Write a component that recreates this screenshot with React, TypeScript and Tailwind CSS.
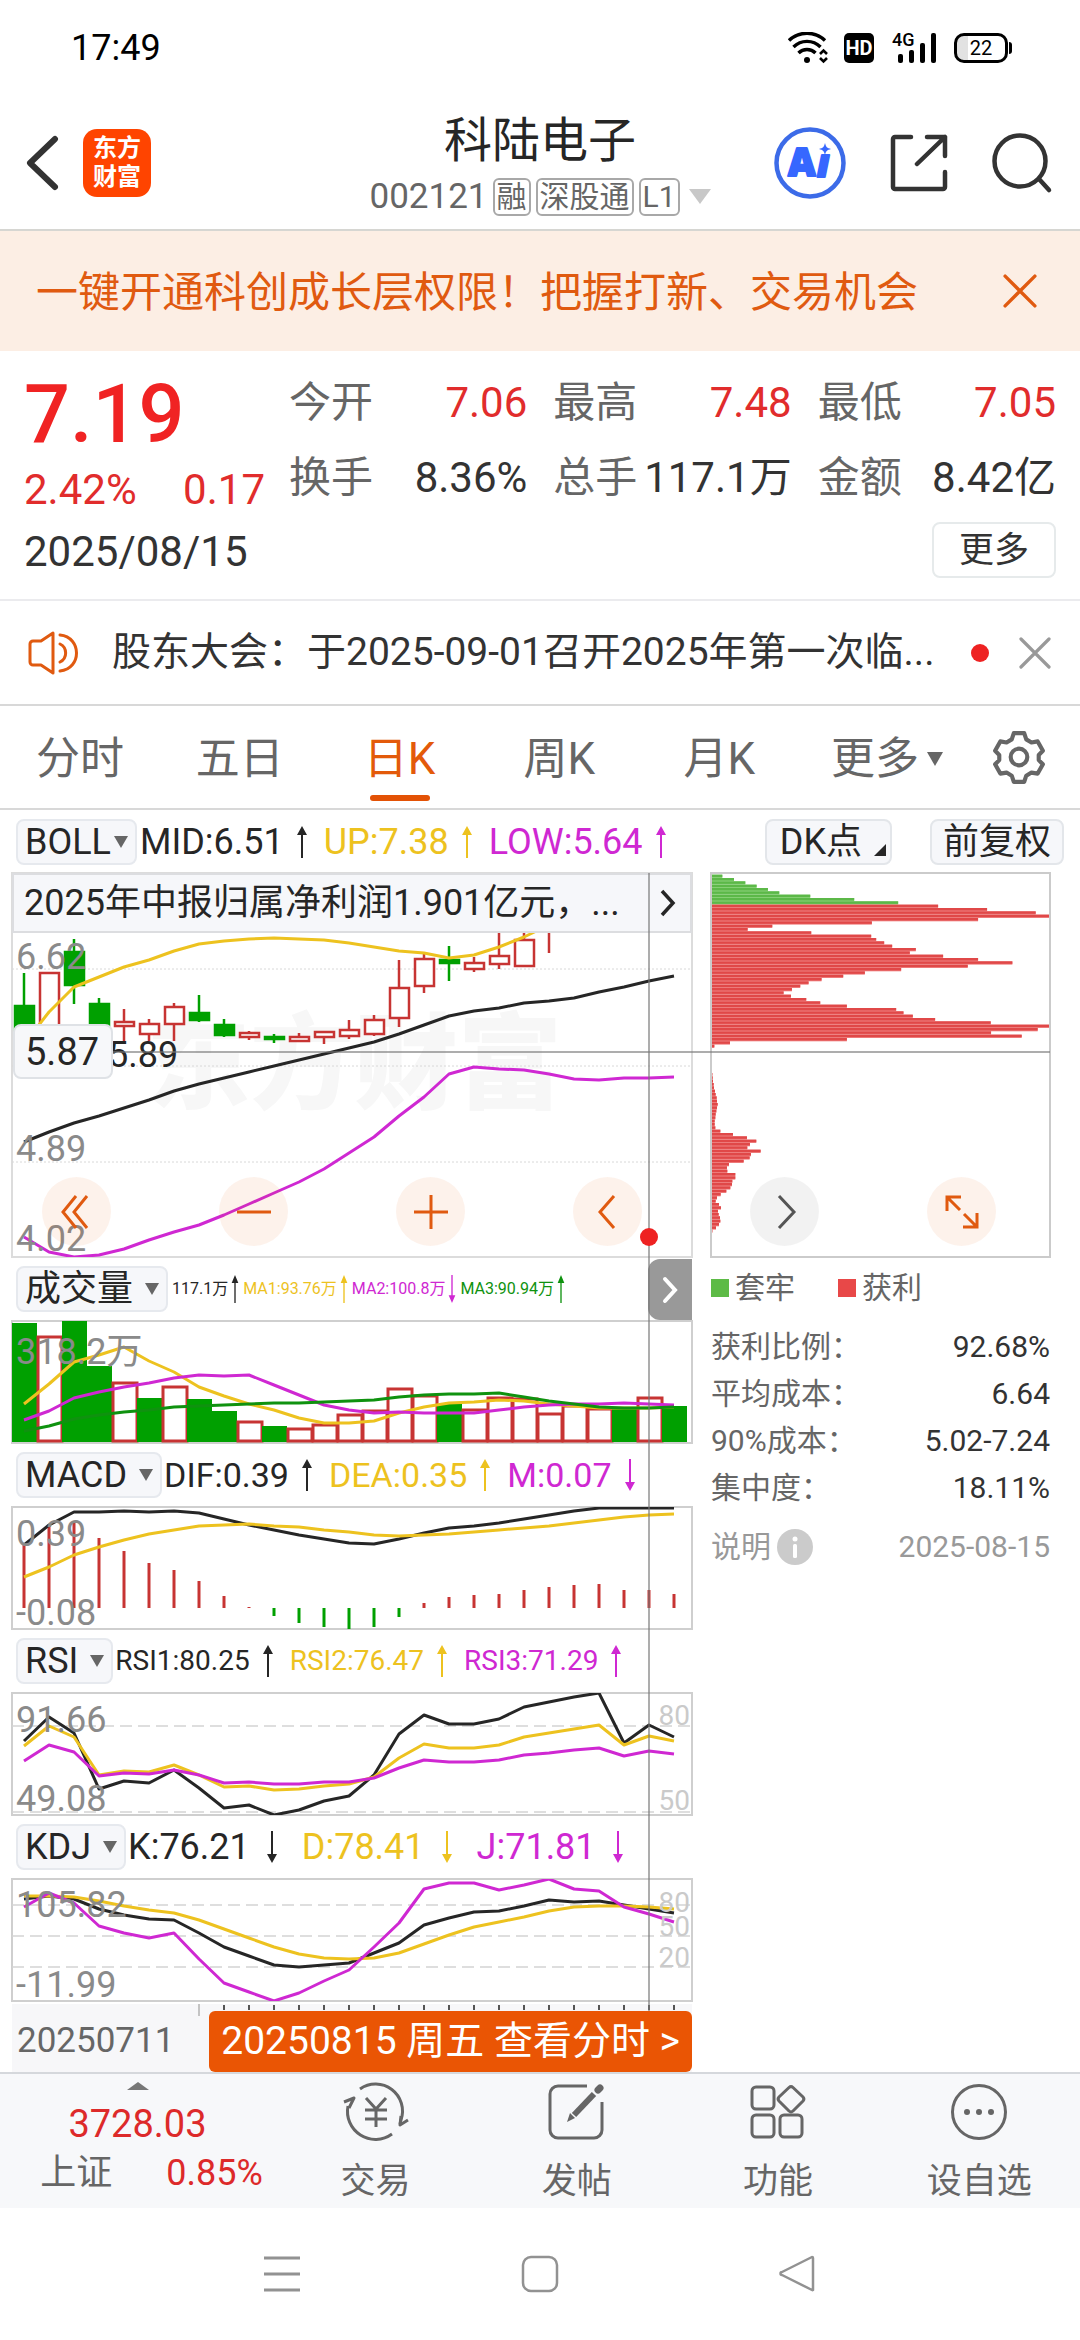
import React from "react";

const DARK = "#262626";
const YELLOW = "#edc21f";
const PURPLE = "#cf28d2";
const RED = "#c73433";
const GREEN = "#00a000";
const DEEP_GREEN = "#0f920f";

/* ---------- chart data: one value per trading day ---------- */
const dayX = (i: number) => 24 + i * 25;

const bollUp = [1044, 1012, 987, 977, 967, 960, 951, 944, 941, 939, 938, 939, 940, 943, 947, 951, 953, 958, 955, 947, 937, 925];
const bollMid = [1142, 1132, 1123, 1116, 1108, 1100, 1091, 1084, 1078, 1072, 1066, 1060, 1054, 1048, 1042, 1034, 1025, 1016, 1011, 1008, 1003, 1001, 998, 992, 987, 981, 976];
const bollLow = [1237, 1252, 1257, 1255, 1249, 1240, 1232, 1225, 1215, 1204, 1193, 1182, 1169, 1153, 1137, 1116, 1097, 1074, 1067, 1069, 1070, 1074, 1079, 1080, 1078, 1078, 1077];

// [rising, body top, body bottom, high, low]
const candles: [boolean, number, number, number, number][] = [
  [false, 1006, 1040, 973, 1040],
  [true, 973, 1045, 973, 1045],
  [false, 952, 985, 939, 1004],
  [false, 1004, 1030, 998, 1030],
  [true, 1022, 1026, 1009, 1044],
  [true, 1024, 1034, 1019, 1041],
  [true, 1007, 1024, 1003, 1041],
  [false, 1013, 1020, 995, 1022],
  [false, 1025, 1035, 1019, 1037],
  [true, 1033, 1037, 1031, 1040],
  [false, 1037, 1039, 1034, 1043],
  [true, 1037, 1041, 1033, 1042],
  [true, 1032, 1037, 1032, 1044],
  [true, 1030, 1036, 1020, 1039],
  [true, 1020, 1034, 1015, 1036],
  [true, 988, 1018, 960, 1027],
  [true, 959, 986, 953, 993],
  [false, 960, 963, 946, 981],
  [true, 963, 969, 957, 972],
  [true, 956, 964, 932, 969],
  [true, 940, 966, 932, 967],
  [true, 920, 925, 920, 953],
];

const volume: [boolean, number][] = [
  [false, 1324], [true, 1337], [false, 1322], [false, 1367], [true, 1383], [false, 1399], [true, 1387], [false, 1400], [false, 1412],
  [true, 1422], [false, 1427], [true, 1429], [true, 1425], [true, 1415], [true, 1411], [true, 1389], [true, 1396], [false, 1405],
  [true, 1410], [true, 1398], [true, 1399], [true, 1414], [true, 1406], [true, 1409], [false, 1409], [true, 1398], [false, 1407],
];
const ma1 = [1404, 1384, 1362, 1355, 1347, 1361, 1372, 1387, 1396, 1404, 1410, 1418, 1423, 1423, 1421, 1413, 1407, 1403, 1402, 1400, 1401, 1404, 1406, 1408, 1408, 1408, 1407];
const ma2 = [1420, 1411, 1398, 1392, 1387, 1383, 1378, 1375, 1376, 1375, 1385, 1395, 1405, 1410, 1413, 1412, 1413, 1413, 1413, 1410, 1407, 1405, 1404, 1404, 1403, 1404, 1405];
const ma3 = [1431, 1426, 1419, 1415, 1412, 1410, 1407, 1406, 1405, 1404, 1403, 1403, 1402, 1401, 1400, 1397, 1395, 1394, 1394, 1393, 1397, 1401, 1404, 1407, 1408, 1408, 1407];

const dif = [1545, 1525, 1512, 1512, 1511, 1512, 1511, 1513, 1519, 1525, 1530, 1535, 1539, 1543, 1544, 1539, 1533, 1528, 1526, 1523, 1519, 1515, 1511, 1508, 1508, 1508, 1508];
const dea = [1577, 1567, 1555, 1547, 1540, 1534, 1530, 1526, 1525, 1524, 1526, 1527, 1530, 1532, 1535, 1536, 1535, 1534, 1532, 1530, 1528, 1526, 1523, 1520, 1517, 1515, 1514];
const macd = [1545, 1525, 1521, 1538, 1551, 1563, 1570, 1581, 1596, 1607, 1616, 1623, 1627, 1629, 1627, 1617, 1603, 1597, 1595, 1594, 1590, 1587, 1585, 1584, 1590, 1590, 1594];

const rsi1 = [1741, 1717, 1733, 1789, 1781, 1783, 1770, 1788, 1808, 1805, 1815, 1810, 1801, 1796, 1775, 1734, 1715, 1724, 1724, 1719, 1707, 1702, 1697, 1693, 1743, 1725, 1737];
const rsi2 = [1746, 1726, 1737, 1775, 1771, 1772, 1765, 1775, 1787, 1786, 1790, 1789, 1786, 1784, 1777, 1758, 1744, 1748, 1748, 1745, 1737, 1733, 1729, 1725, 1745, 1736, 1741];
const rsi3 = [1761, 1745, 1752, 1776, 1773, 1774, 1770, 1775, 1783, 1782, 1784, 1784, 1782, 1782, 1778, 1768, 1760, 1762, 1762, 1760, 1755, 1753, 1750, 1748, 1756, 1751, 1754];

const kLine = [1899, 1896, 1899, 1909, 1915, 1919, 1920, 1933, 1947, 1956, 1965, 1967, 1965, 1963, 1953, 1943, 1925, 1918, 1912, 1911, 1906, 1900, 1902, 1901, 1905, 1909, 1913];
const dLine = [1896, 1896, 1897, 1901, 1906, 1910, 1913, 1920, 1929, 1938, 1947, 1954, 1958, 1959, 1958, 1953, 1944, 1935, 1927, 1922, 1917, 1911, 1907, 1906, 1906, 1907, 1909];
const jLine = [1907, 1893, 1903, 1926, 1933, 1938, 1933, 1959, 1983, 1992, 2001, 1993, 1981, 1970, 1947, 1923, 1889, 1883, 1883, 1890, 1885, 1879, 1889, 1891, 1907, 1914, 1922];

// holdings by price level, as bar lengths
const trapped = [34, 69, 103, 137, 171, 205, 298, 430, 562];
const profitHigh = [682, 829, 975, 1018, 802, 483, 184, 110, 301, 481, 496, 520, 544, 615, 597, 697, 802, 905, 771, 571, 462, 397, 332, 293, 268, 243, 218, 240, 286, 328, 408, 556, 578, 606, 673, 840, 1018, 981, 841, 933, 408, 57, 10];
const profitLow = [4, 5, 6, 8, 9, 12, 14, 17, 18, 20, 18, 16, 14, 13, 11, 11, 13, 28, 66, 108, 136, 117, 109, 149, 120, 116, 98, 54, 48, 49, 73, 73, 64, 63, 58, 46, 29, 18, 14, 24, 30, 21, 23, 27, 28, 24, 15, 4, 3];

/* ---------- shared pieces ---------- */
function Line({ ys, color }: { ys: number[]; color: string }) {
  return (
    <polyline
      points={ys.map((y, i) => `${dayX(i)},${y}`).join(" ")}
      fill="none"
      stroke={color}
      strokeWidth="3"
      strokeLinejoin="round"
    />
  );
}

function Trend({ up = true, color, small = false }: { up?: boolean; color: string; small?: boolean }) {
  return (
    <svg viewBox="0 0 12 32" className={small ? "h-7 w-2" : "h-8 w-3"} fill={color} preserveAspectRatio="none" aria-hidden="true">
      {up ? <path d="M6 0l5 9H7v23H5V9H1z" /> : <path d="M6 32l5-9H7V0H5v23H1z" />}
    </svg>
  );
}

function Dropdown({ label, tight = false }: { label: string; tight?: boolean }) {
  return (
    <button
      type="button"
      className={
        "flex h-[46px] shrink-0 items-center rounded-lg border-2 border-[#e6e9ee] bg-[#f6f7fa] px-[7px] text-[36px] leading-none " +
        (tight ? "gap-[3px]" : "gap-3")
      }
    >
      {label}
      <svg viewBox="0 0 14 14" className="h-[14px] w-[14px]" fill="#666" aria-hidden="true">
        <path d="M0 1h14L7 13z" />
      </svg>
    </button>
  );
}

type Reading = { text: string; color: string; up: boolean };

function Readings({ items, className, gap = "gap-3", small = false }: { items: Reading[]; className: string; gap?: string; small?: boolean }) {
  return (
    <div className={"flex items-center whitespace-nowrap leading-none " + className}>
      {items.map((r) => (
        <span key={r.text} className={"flex shrink-0 items-center " + gap} style={{ color: r.color }}>
          {r.text}
          <Trend up={r.up} color={r.color} small={small} />
        </span>
      ))}
    </div>
  );
}

function Panel({ top, children, labels }: { top: number; children: React.ReactNode; labels: React.ReactNode }) {
  return (
    <div className="relative h-[122px] outline-2 -outline-offset-1 outline-[#cfcfcf]">
      <svg viewBox={`12 ${top} 680 122`} preserveAspectRatio="none" className="absolute inset-0 h-full w-full" aria-hidden="true">
        {children}
      </svg>
      {labels}
    </div>
  );
}

function Dashes({ ys }: { ys: number[] }) {
  return (
    <>
      {ys.map((y) => (
        <line key={y} x1="12" x2="690" y1={y} y2={y} stroke="#d4d4d4" strokeWidth="1.5" strokeDasharray="12 6" />
      ))}
    </>
  );
}

const axis = "absolute left-[4px] text-[36px] leading-none text-[#8a8a8a]";
const level = "absolute right-[2px] text-[28px] leading-none text-[#cacaca]";

function Cross({ className, color }: { className: string; color: string }) {
  return (
    <svg viewBox="0 0 32 32" className={className} fill="none" stroke={color} strokeWidth="3.2" strokeLinecap="round" aria-hidden="true">
      <path d="M2 2l28 28M30 2L2 30" />
    </svg>
  );
}

/* ---------- page sections ---------- */
function StatusBar() {
  return (
    <div className="flex h-24 items-center justify-between pr-[68px] pl-[71px] text-black">
      <span className="text-[36px] leading-none">17:49</span>
      <div className="flex items-center">
        <svg viewBox="0 0 40 32" className="mr-4 h-8 w-10" fill="none" stroke="#000" strokeWidth="3.4" aria-hidden="true">
          <path d="M1 8.500a26 26 0 0 1 36 0M5.500 15a19 19 0 0 1 27 0M10.500 21a12 12 0 0 1 17 0" />
          <circle cx="19" cy="28" r="3" fill="#000" stroke="none" />
          <path d="M32 22l3.500-3.500L39 22M32 26l3.500 3.500L39 26" strokeWidth="2.600" />
        </svg>
        <span className="mr-[18px] flex h-[30px] w-[30px] items-center justify-center rounded-[5px] bg-black text-[20px] leading-none font-bold text-white">
          HD
        </span>
        <span className="relative mr-[18px] h-[30px] w-11">
          <span className="absolute top-0 left-0 text-[18px] leading-[14px] font-medium">4G</span>
          <svg viewBox="0 0 44 30" className="absolute inset-0 h-full w-full" aria-hidden="true">
            <rect x="6" y="21" width="5" height="9" rx="2" />
            <rect x="17" y="17" width="5" height="13" rx="2" />
            <rect x="28" y="10" width="5" height="20" rx="2" />
            <rect x="39" y="0" width="5" height="30" rx="2" />
          </svg>
        </span>
        <span className="flex h-[30px] w-[54px] items-center justify-center rounded-[10px] border-3 border-black bg-linear-to-r from-[#e2e2e2] from-22% to-white to-22% text-[20px] leading-none">
          22
        </span>
        <span className="ml-px h-3 w-[3px] rounded-r bg-black" />
      </div>
    </div>
  );
}

function Header() {
  const tag = "flex h-[38px] items-center rounded-md border-2 border-[#a8a8a8] px-[2px] text-[30px] leading-none";
  return (
    <header className="grid h-[135px] grid-cols-[1fr_auto_1fr] items-center border-b-2 border-[#d6d6d2]">
      <div className="flex items-center gap-6 pl-[26px]">
        <button type="button" aria-label="返回">
          <svg viewBox="0 0 33 56" className="h-14 w-[33px]" fill="none" stroke="#333" strokeWidth="6" strokeLinecap="round" strokeLinejoin="round">
            <path d="M29 4L4 28l25 24" />
          </svg>
        </button>
        <span className="flex h-[68px] w-[68px] flex-col items-center justify-center rounded-[14px] bg-[#ff4400] text-[24px] leading-[29px] font-bold text-white">
          <span>东方</span>
          <span>财富</span>
        </span>
      </div>
      <div className="flex flex-col items-center pt-1">
        <h1 className="text-[48px] leading-[64px]">科陆电子</h1>
        <button type="button" className="flex h-12 items-center gap-[5px] text-[35px] leading-none text-[#666]">
          002121
          <span className={tag}>融</span>
          <span className={tag}>深股通</span>
          <span className={tag}>L1</span>
          <svg viewBox="0 0 22 15" className="ml-1 h-[15px] w-[22px]" fill="#c8c8c8" aria-hidden="true">
            <path d="M0 0h22L11 15z" />
          </svg>
        </button>
      </div>
      <div className="flex items-center justify-end gap-[43px] pr-[27px]">
        <button type="button" aria-label="AI">
          <svg viewBox="0 0 74 74" className="h-[74px] w-[74px]" aria-hidden="true">
            <circle cx="37" cy="37" r="33.500" fill="none" stroke="#3c6be8" strokeWidth="4.500" />
            <g fontFamily="Open Sans, sans-serif" fontWeight="800" fill="#3667ff" stroke="#3667ff" strokeWidth="2" strokeLinejoin="round">
              <text x="15" y="50" fontSize="38">A</text>
              <text x="44" y="51" fontSize="38" fontStyle="italic">ı</text>
            </g>
            <path d="M52 17c1 4 2 5 6 6-4 1-5 2-6 6-1-4-2-5-6-6 4-1 5-2 6-6z" fill="#3667ff" />
          </svg>
        </button>
        <button type="button" aria-label="分享">
          <svg viewBox="0 0 58 58" className="h-[58px] w-[58px]" fill="none" stroke="#333" strokeWidth="4.500" strokeLinecap="round" strokeLinejoin="round">
            <path d="M21 3H5a2 2 0 0 0-2 2v48a2 2 0 0 0 2 2h48a2 2 0 0 0 2-2V38M37 3h18v19M55 3L27 30" />
          </svg>
        </button>
        <button type="button" aria-label="搜索">
          <svg viewBox="0 0 62 62" className="h-[62px] w-[62px]" fill="none" stroke="#333" strokeWidth="4.500" strokeLinecap="round">
            <circle cx="29" cy="29" r="25.500" />
            <path d="M48 47l10 11" />
          </svg>
        </button>
      </div>
    </header>
  );
}

function Quote() {
  const stats = [
    ["今开", "7.06", true],
    ["最高", "7.48", true],
    ["最低", "7.05", true],
    ["换手", "8.36%", false],
    ["总手", "117.1万", false],
    ["金额", "8.42亿", false],
  ] as const;
  return (
    <section className="flex h-[250px] border-b-2 border-[#ebebee] pr-6 pl-6 text-[42px] leading-none">
      <div className="flex w-[265px] shrink-0 flex-col pt-[22px] whitespace-nowrap">
        <span className="text-[81px] leading-[84px] font-medium text-[#f02323]">7.19</span>
        <span className="mt-3 flex justify-between pr-6 text-[#e12c2c]">
          <span>2.42%</span>
          <span>0.17</span>
        </span>
        <span className="mt-5 text-[#333]">2025/08/15</span>
      </div>
      <div className="flex flex-1 flex-col pt-[31px]">
        <dl className="grid grid-cols-3 gap-x-[26px]">
          {stats.map(([name, value, red]) => (
            <div key={name} className="flex h-[75px] justify-between whitespace-nowrap">
              <dt className="text-[#666]">{name}</dt>
              <dd className={red ? "text-[#e12c2c]" : "text-[#333]"}>{value}</dd>
            </div>
          ))}
        </dl>
        <button type="button" className="-mt-[10px] h-14 w-[124px] self-end rounded-lg border-2 border-[#e6eaeb] text-[35px] leading-none text-[#333]">
          更多
        </button>
      </div>
    </section>
  );
}

function Tabs() {
  const tabs = ["分时", "五日", "日K", "周K", "月K"];
  return (
    <nav className="flex h-[104px] border-b-2 border-[#d8d8d8] text-[44px] leading-none text-[#666]">
      {tabs.map((t) => (
        <button
          key={t}
          type="button"
          className={"relative flex w-[14.8%] items-center justify-center pt-1 " + (t === "日K" ? "text-[#e35a0a]" : "")}
        >
          {t}
          {t === "日K" && <span className="absolute bottom-[7px] h-[6px] w-[60px] rounded-full bg-[#e35205]" />}
        </button>
      ))}
      <button type="button" className="flex w-[14.8%] items-center justify-end gap-2 pt-1 pr-4">
        更多
        <svg viewBox="0 0 16 14" className="h-[14px] w-4" fill="#666" aria-hidden="true">
          <path d="M0 0h16L8 14z" />
        </svg>
      </button>
      <button type="button" aria-label="设置" className="flex flex-1 items-center justify-center">
        <svg viewBox="0 0 52 52" className="h-[54px] w-[54px]" fill="none" stroke="#666" strokeWidth="4" strokeLinejoin="round">
          <path d="M21 3h10l2 6 5 3 6-1 5 9-4 4v5l4 4-5 9-6-1-5 3-2 6H21l-2-6-5-3-6 1-5-9 4-4v-5l-4-4 5-9 6 1 5-3z" />
          <circle cx="26" cy="26" r="8" />
        </svg>
      </button>
    </nav>
  );
}

function MainChart() {
  return (
    <div className="relative h-[384px] overflow-hidden outline-2 -outline-offset-1 outline-[#dcdcdc]">
      <div className="absolute inset-x-0 top-[140px] pl-1 text-center text-[104px] leading-[106px] font-black text-[#f7f7f7]" aria-hidden="true">
        东方财富
      </div>
      <svg viewBox="12 873 680 384" preserveAspectRatio="none" className="absolute inset-0 h-full w-full" aria-hidden="true">
        {[969, 1066, 1162].map((y) => (
          <line key={y} x1="12" x2="692" y1={y} y2={y} stroke="#d8d8d8" strokeWidth="1" strokeDasharray="2 2" />
        ))}
        {candles.map(([up, top, bottom, high, low], i) => {
          const x = dayX(i);
          const color = up ? RED : GREEN;
          return (
            <g key={i} stroke={color} strokeWidth="2.500" fill={up ? "#fff" : GREEN}>
              <line x1={x} x2={x} y1={high} y2={low} />
              <rect x={x - 9} y={top} width="19" height={bottom - top} />
            </g>
          );
        })}
        <Line ys={bollUp} color={YELLOW} />
        <Line ys={bollMid} color={DARK} />
        <Line ys={bollLow} color={PURPLE} />
      </svg>
      <div className={axis + " top-[66px]"}>6.62</div>
      <div className={axis + " top-[258px]"}>4.89</div>
      <div className={axis + " top-[348px]"}>4.02</div>
      <div className="absolute top-[164px] left-[96px] text-[36px] leading-none">5.89</div>
      <div className="absolute top-[151px] left-px flex h-[55px] w-[100px] items-center rounded-lg border-2 border-[#dfe2e6] bg-[#f7f8fa] pl-[10px] text-[38px] leading-none">
        5.87
      </div>
      <div className="relative flex h-[60px] items-center border-2 border-[#dcdde0] bg-[#f6f7fa] text-[36px] leading-none whitespace-nowrap">
        <span className="flex-1 pl-[10px]">2025年中报归属净利润1.901亿元，...</span>
        <button type="button" aria-label="下一条" className="flex h-full w-[44px] items-center justify-center">
          <svg viewBox="0 0 16 28" className="h-7 w-4" fill="none" stroke="#262626" strokeWidth="3.500">
            <path d="M2 2l11 12L2 26" />
          </svg>
        </button>
      </div>
    </div>
  );
}

function IndicatorRow({ label, children }: { label: string; children: React.ReactNode }) {
  return (
    <div className="relative flex h-16 items-center pl-1">
      <Dropdown label={label} />
      {children}
    </div>
  );
}

function Bars({ widths, start, fill, seam }: { widths: number[]; start: number; fill: string; seam: string }) {
  return (
    <>
      {widths.map((w, i) => (
        <g key={i}>
          <rect x="0" y={start + i * 10} width={w} height="10" fill={seam} />
          <rect x="0" y={start + i * 10} width={w} height="7.500" fill={fill} />
        </g>
      ))}
    </>
  );
}

function CostPanel() {
  const rows = [
    ["获利比例：", "92.68%"],
    ["平均成本：", "6.64"],
    ["90%成本：", "5.02-7.24"],
    ["集中度：", "18.11%"],
  ];
  return (
    <div className="text-[30px] leading-none text-[#666]">
      <div className="h-[384px] outline-2 -outline-offset-1 outline-[#cbcbcb]">
        <svg viewBox="0 0 1018 1152" preserveAspectRatio="none" className="h-full w-full" aria-hidden="true">
          <Bars widths={trapped} start={5} fill="#5cb848" seam="#8ed47c" />
          <Bars widths={profitHigh} start={95} fill="#e04848" seam="#f08585" />
          <Bars widths={profitLow} start={600} fill="#e04848" seam="#f08585" />
        </svg>
      </div>
      <div className="flex h-[62px] items-center">
        <span className="mr-[6px] h-[18px] w-[18px] bg-[#5dbb46]" />
        套牢
        <span className="mr-[6px] ml-[43px] h-[18px] w-[18px] bg-[#e84848]" />
        获利
      </div>
      <dl className="pt-1">
        {rows.map(([name, value]) => (
          <div key={name} className="flex h-[47px] items-center justify-between">
            <dt>{name}</dt>
            <dd className="text-[#333]">{value}</dd>
          </div>
        ))}
      </dl>
      <div className="flex h-[72px] items-center justify-between text-[#999]">
        <button type="button" className="flex items-center gap-[6px]">
          说明
          <svg viewBox="0 0 36 36" className="h-9 w-9" aria-hidden="true">
            <circle cx="18" cy="18" r="18" fill="#cbcbcb" />
            <circle cx="18" cy="10" r="2.500" fill="#fff" />
            <rect x="16" y="15" width="4" height="14" rx="1.500" fill="#fff" />
          </svg>
        </button>
        2025-08-15
      </div>
    </div>
  );
}

function ChartControls() {
  const round = "flex h-[69px] w-[69px] items-center justify-center rounded-full ";
  const tools: [string, string][] = [
    ["最早", "M17 2L4 18l13 16M28 2L15 18l13 16"],
    ["缩小", "M1 18h34"],
    ["放大", "M1 18h34M18 1v34"],
    ["向前", "M24 2L10 18l14 16"],
    ["向后", "M12 2l15 16-15 16"],
    ["全屏", "M3 17V3h14M3 3l13 13M33 19v14H19M33 33L20 20"],
  ];
  return (
    <div className="absolute top-[304px] right-[84px] left-[42px] flex justify-between">
      {tools.map(([name, d]) => (
        <button
          key={name}
          type="button"
          aria-label={name}
          className={round + (name === "向后" ? "bg-black/5 text-[#555]" : "bg-[#ea5504]/8 text-[#e05a10]")}
        >
          <svg viewBox="0 0 36 36" className="h-9 w-9" fill="none" stroke="currentColor" strokeWidth="3">
            <path d={d} />
          </svg>
        </button>
      ))}
    </div>
  );
}

function Charts() {
  return (
    <main>
      <div className="flex h-[63px] items-center pr-4 pl-4">
        <Dropdown label="BOLL" tight />
        <Readings
          className="gap-4 pl-[3px] text-[36px]"
          items={[
            { text: "MID:6.51", color: DARK, up: true },
            { text: "UP:7.38", color: YELLOW, up: true },
            { text: "LOW:5.64", color: PURPLE, up: true },
          ]}
        />
        <div className="ml-auto flex gap-[38px] text-[36px] leading-none">
          <button type="button" className="flex h-[46px] items-center gap-3 rounded-lg border-2 border-[#e3e6ea] bg-[#f6f7fa] pr-1 pl-[13px]">
            DK点
            <svg viewBox="0 0 12 12" className="mt-4 h-3 w-3" fill="#262626" aria-hidden="true">
              <path d="M12 0v12H0z" />
            </svg>
          </button>
          <button type="button" className="h-[46px] rounded-lg border-2 border-[#e3e6ea] bg-[#f6f7fa] px-[11px]">
            前复权
          </button>
        </div>
      </div>

      <div className="relative grid grid-cols-[680fr_339fr] gap-[19px] pr-[30px] pl-3">
        <div className="relative min-w-0">
          <MainChart />

          <IndicatorRow label="成交量">
            <Readings
              small
              gap="gap-[3px]"
              className="gap-1 pl-1 text-base"
              items={[
                { text: "117.1万", color: DARK, up: true },
                { text: "MA1:93.76万", color: YELLOW, up: true },
                { text: "MA2:100.8万", color: PURPLE, up: false },
                { text: "MA3:90.94万", color: DEEP_GREEN, up: true },
              ]}
            />
            <button type="button" aria-label="收起" className="absolute top-[2px] right-0 flex h-[61px] w-11 items-center justify-center rounded-l-xl bg-[#999]">
              <svg viewBox="0 0 16 28" className="h-7 w-4" fill="none" stroke="#fff" strokeWidth="4" strokeLinecap="round">
                <path d="M3 3l10 11L3 25" />
              </svg>
            </button>
          </IndicatorRow>
          <Panel top={1321} labels={<div className={axis + " top-[13px]"}>318.2万</div>}>
            {volume.map(([up, y], i) =>
              up ? (
                <rect key={i} x={dayX(i) - 11} y={y} width="24" height={1441 - y} fill="#fff" stroke={RED} strokeWidth="3" />
              ) : (
                <rect key={i} x={dayX(i) - 12} y={y - 1} width="25" height={1443 - y} fill={GREEN} />
              ),
            )}
            <Line ys={ma1} color={YELLOW} />
            <Line ys={ma2} color={PURPLE} />
            <Line ys={ma3} color={DEEP_GREEN} />
          </Panel>

          <IndicatorRow label="MACD">
            <Readings
              className="gap-4 pl-[2px] text-[34px]"
              items={[
                { text: "DIF:0.39", color: DARK, up: true },
                { text: "DEA:0.35", color: YELLOW, up: true },
                { text: "M:0.07", color: PURPLE, up: false },
              ]}
            />
          </IndicatorRow>
          <Panel
            top={1507}
            labels={
              <>
                <div className={axis + " top-[9px]"}>0.39</div>
                <div className={axis + " top-[88px]"}>-0.08</div>
              </>
            }
          >
            {macd.map((y, i) => (
              <line key={i} x1={dayX(i)} x2={dayX(i)} y1="1608" y2={y} stroke={y > 1608 ? GREEN : RED} strokeWidth="3" />
            ))}
            <Line ys={dif} color={DARK} />
            <Line ys={dea} color={YELLOW} />
          </Panel>

          <IndicatorRow label="RSI">
            <Readings
              className="gap-4 pl-[2px] text-[28px]"
              items={[
                { text: "RSI1:80.25", color: DARK, up: true },
                { text: "RSI2:76.47", color: YELLOW, up: true },
                { text: "RSI3:71.29", color: PURPLE, up: true },
              ]}
            />
          </IndicatorRow>
          <Panel
            top={1693}
            labels={
              <>
                <div className={axis + " top-[9px]"}>91.66</div>
                <div className={axis + " top-[88px]"}>49.08</div>
                <div className={level + " top-[9px]"}>80</div>
                <div className={level + " top-[94px]"}>50</div>
              </>
            }
          >
            <Dashes ys={[1726, 1812]} />
            <Line ys={rsi1} color={DARK} />
            <Line ys={rsi2} color={YELLOW} />
            <Line ys={rsi3} color={PURPLE} />
          </Panel>

          <IndicatorRow label="KDJ">
            <Readings
              gap="gap-4"
              className="gap-6 pl-[2px] text-[36px]"
              items={[
                { text: "K:76.21", color: DARK, up: false },
                { text: "D:78.41", color: YELLOW, up: false },
                { text: "J:71.81", color: PURPLE, up: false },
              ]}
            />
          </IndicatorRow>
          <Panel
            top={1879}
            labels={
              <>
                <div className={axis + " top-[8px]"}>105.82</div>
                <div className={axis + " top-[88px]"}>-11.99</div>
                <div className={level + " top-[10px]"}>80</div>
                <div className={level + " top-[34px]"}>50</div>
                <div className={level + " top-[65px]"}>20</div>
              </>
            }
          >
            <Dashes ys={[1905, 1936, 1967]} />
            <Line ys={kLine} color={DARK} />
            <Line ys={dLine} color={YELLOW} />
            <Line ys={jLine} color={PURPLE} />
          </Panel>

          <div className="relative mt-[3px] flex h-[68px] items-end justify-between bg-[#f7f7f9]">
            <svg viewBox="12 2004 680 12" preserveAspectRatio="none" className="absolute inset-x-0 top-0 h-3 w-full" stroke="#555" strokeWidth="2" aria-hidden="true">
              <path d="M199 2004v12" stroke="#c4c4c4" />
              {Array.from({ length: 19 }, (_, i) => (
                <path key={i} d={`M${dayX(i + 8)} 2005v5`} />
              ))}
            </svg>
            <span className="self-center pt-1 pl-[5px] text-[35px] leading-none text-[#666]">20250711</span>
            <button type="button" className="relative h-[61px] rounded-md bg-[#ea5504] px-3 text-[39px] leading-none whitespace-nowrap text-white">
              20250815 周五 查看分时 &gt;
            </button>
          </div>
          <div className="pointer-events-none absolute top-0 bottom-[61px] left-[93.5%] w-[2px] bg-[#777]/60" />
          <div className="absolute top-[355px] left-[93.5%] -ml-2 h-[18px] w-[18px] rounded-full bg-[#ee2222]" />
        </div>
        <CostPanel />
        <div className="pointer-events-none absolute top-[178px] right-[30px] left-[113px] h-[2px] bg-[#777]/60" />
        <ChartControls />
      </div>
    </main>
  );
}

function BottomBar() {
  const items: [string, React.ReactNode][] = [
    [
      "交易",
      <>
        <path d="M16 7a27 27 0 0 1 41 31l-1 4M4 24A28 28 0 0 0 48 52" />
        <path d="M0 20l10-4-5 10M64 38l-8 5 1-9" strokeLinejoin="round" />
        <path d="M22 16l10 11 10-11M21 28h22M21 37h22M32 27v18" />
      </>,
    ],
    [
      "发帖",
      <>
        <path d="M42 4H13a8 8 0 0 0-8 8v36a8 8 0 0 0 8 8h36a8 8 0 0 0 8-8V20" />
        <path d="M29 33L49 12" strokeWidth="6" />
        <path d="M22 40l3-9 5 5z" fill="#666" stroke="none" />
        <path d="M53 8l2-2" strokeWidth="7" strokeLinecap="round" />
      </>,
    ],
    [
      "功能",
      <>
        <rect x="6" y="5" width="22" height="22" rx="4" />
        <rect x="6" y="33" width="22" height="22" rx="4" />
        <rect x="34" y="33" width="22" height="22" rx="4" />
        <path d="M43 5.500a3 3 0 0 1 4 0l10 9.500a3 3 0 0 1 0 4l-10 10a3 3 0 0 1-4 0l-10-10a3 3 0 0 1 0-4z" />
      </>,
    ],
    [
      "设自选",
      <>
        <circle cx="32" cy="30" r="26.500" />
        <g fill="#666" stroke="none">
          <circle cx="20" cy="30" r="3" />
          <circle cx="32" cy="30" r="3" />
          <circle cx="44" cy="30" r="3" />
        </g>
      </>,
    ],
  ];
  return (
    <nav className="flex h-[136px] border-t-2 border-[#d5d8dc] bg-[#f7f8fa] leading-none text-[#666]">
      <button type="button" className="flex w-[275px] flex-col items-center pt-2">
        <svg viewBox="0 0 22 8" className="h-2 w-[22px]" fill="#777" aria-hidden="true">
          <path d="M11 0l11 8H0z" />
        </svg>
        <span className="mt-[15px] text-[38px] text-[#dd2a2a]">3728.03</span>
        <span className="mt-3 flex gap-[54px] pl-7 text-[36px]">
          <span>上证</span>
          <span className="text-[#dd2a2a]">0.85%</span>
        </span>
      </button>
      {items.map(([name, drawing]) => (
        <button key={name} type="button" className="flex flex-1 flex-col items-center gap-[22px] pt-2 text-[35px]">
          <svg viewBox="-1 0 66 60" className="h-[60px] w-[66px]" fill="none" stroke="#666" strokeWidth="3" aria-hidden="true">
            {drawing}
          </svg>
          {name}
        </button>
      ))}
    </nav>
  );
}

export default function App() {
  return (
    <div className="flex min-h-screen w-full flex-col bg-white font-[Roboto,'Noto_Sans_CJK_SC',sans-serif] text-[#262626]" lang="zh-CN">
      <StatusBar />
      <Header />
      <section className="flex h-[120px] items-center justify-between bg-[#fceee4] pr-[43px] pl-9 text-[42px] leading-none text-[#e05a10]">
        <p className="pt-1 whitespace-nowrap">一键开通科创成长层权限！把握打新、交易机会</p>
        <button type="button" aria-label="关闭">
          <Cross className="h-[34px] w-[34px]" color="#e05a10" />
        </button>
      </section>
      <Quote />
      <section className="flex h-[105px] items-center border-b-2 border-[#d8d8d8] pr-[29px] pl-7 text-[39px] leading-none text-[#333]">
        <svg viewBox="0 0 52 44" className="mr-8 h-11 w-[52px]" fill="none" stroke="#e05a10" strokeWidth="3" strokeLinejoin="round" aria-hidden="true">
          <path d="M25 2v40L13 34H5a3 3 0 0 1-3-3V13a3 3 0 0 1 3-3h8z" />
          <path d="M32 13a10 10 0 0 1 0 18M32 4c22 2 22 34 0 36" strokeLinecap="round" />
        </svg>
        <p className="flex-1 whitespace-nowrap">股东大会：于2025-09-01召开2025年第一次临...</p>
        <span className="mr-[30px] h-[18px] w-[18px] rounded-full bg-[#ee2222]" />
        <button type="button" aria-label="关闭">
          <Cross className="h-8 w-8" color="#999" />
        </button>
      </section>
      <Tabs />
      <Charts />
      <BottomBar />
      <div className="flex h-[132px] items-center justify-center gap-[220px]">
        <svg viewBox="0 0 38 38" className="h-[38px] w-[38px]" fill="none" stroke="#929292" strokeWidth="3" aria-hidden="true">
          <path d="M1 3h36M1 19h36M1 35h36" />
        </svg>
        <svg viewBox="0 0 38 38" className="h-[38px] w-[38px]" fill="none" stroke="#929292" strokeWidth="2.500" aria-hidden="true">
          <rect x="2" y="2" width="34" height="34" rx="8" />
        </svg>
        <svg viewBox="0 0 38 38" className="h-[38px] w-[38px]" fill="none" stroke="#929292" strokeWidth="2.500" strokeLinejoin="round" aria-hidden="true">
          <path d="M34 3v32a1 1 0 0 1-1 0L3 20a1.500 1.500 0 0 1 0-3L33 2a1 1 0 0 1 1 1z" />
        </svg>
      </div>
    </div>
  );
}
